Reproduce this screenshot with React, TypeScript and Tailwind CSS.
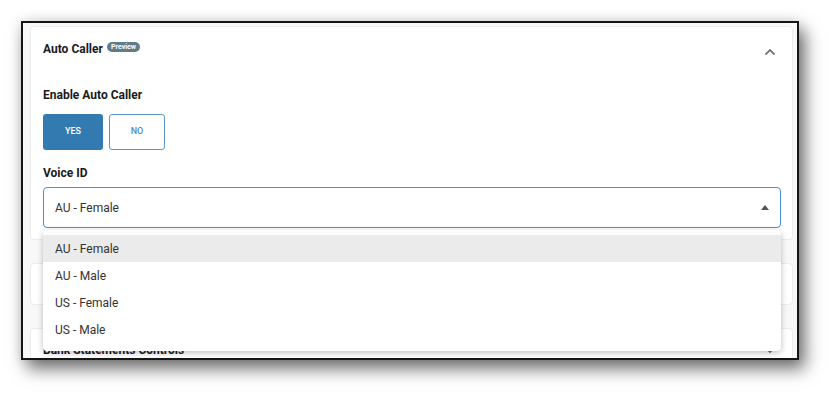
const font = { fontFamily: 'Roboto, "Liberation Sans", sans-serif' }

const voices = ['AU - Female', 'AU - Male', 'US - Female', 'US - Male']

function ChevronUp() {
  return (
    <svg width="12" height="8" viewBox="0 0 12 8" className="text-[#777]">
      <path d="M1.5 6.5 L6 2 L10.5 6.5" fill="none" stroke="currentColor" strokeWidth="1.8" />
    </svg>
  )
}

function ChevronDown() {
  return (
    <svg width="12" height="8" viewBox="0 0 12 8" className="text-[#777]">
      <path d="M1.5 1.5 L6 6 L10.5 1.5" fill="none" stroke="currentColor" strokeWidth="1.8" />
    </svg>
  )
}

function SectionCard({ title }: { title: string }) {
  return (
    <div className="flex h-[42px] shrink-0 items-center justify-between rounded-[4px] border border-[#ececec] bg-white pl-[12px] pr-[16px] pt-[2px]">
      <span className="text-[12px] font-bold text-[#1a1a1a]">{title}</span>
      <ChevronDown />
    </div>
  )
}

export default function App() {
  return (
    <div className="h-[402px] w-[840px] overflow-hidden bg-white pl-[21px] pt-[21px]" style={font}>
      <div className="flex h-[339px] w-[778px] flex-col gap-[23px] overflow-hidden border-2 border-[#151515] bg-[#f8f8f8] pl-[7px] pr-[4px] pt-[3px] shadow-[6px_9px_16px_rgba(0,0,0,0.55),0_0_12px_rgba(0,0,0,0.12)]">
        <div className="relative z-10 shrink-0 rounded-[4px] border border-[#ececec] bg-white pb-[11px] pl-[12px] pr-[11px] pt-[11px]">
          <div className="flex h-[22px] items-center justify-between pr-[5px]">
            <div className="flex items-start">
              <span className="text-[12px] font-bold leading-[22px] text-[#1a1a1a]">Auto Caller</span>
              <span className="ml-[4px] mt-[4px] rounded-full bg-[#5e7c8b] px-[4px] text-[7px] font-bold leading-[10px] text-white">
                Preview
              </span>
            </div>
            <span className="mt-[6px]">
              <ChevronUp />
            </span>
          </div>

          <div className="mt-[27px] text-[12px] font-bold leading-[16px] text-[#1a1a1a]">Enable Auto Caller</div>
          <div className="mt-[11px] flex gap-[6px]">
            <button
              type="button"
              className="h-[36px] w-[60px] rounded-[3px] bg-[#337ab1] text-[9px] font-medium text-white"
            >
              YES
            </button>
            <button
              type="button"
              className="h-[36px] w-[56px] rounded-[3px] border border-[#5b97c9] bg-white text-[9px] font-medium text-[#4f8cc0]"
            >
              NO
            </button>
          </div>

          <div className="mt-[15px] text-[12px] font-bold leading-[16px] text-[#1a1a1a]">Voice ID</div>
          <div className="relative mt-[6px]">
            <div className="flex h-[41px] items-center justify-between rounded-[4px] border border-[#4a8fd6] bg-white pl-[11px] pr-[11px]">
              <span className="text-[12px] text-[#333]">AU - Female</span>
              <svg width="8" height="5" viewBox="0 0 8 5" className="text-[#555]">
                <path d="M0 5 L4 0 L8 5 Z" fill="currentColor" />
              </svg>
            </div>

            <ul className="absolute left-0 right-0 top-[43px] rounded-[4px] bg-white pb-[8px] pt-[5px] shadow-[0_2px_6px_rgba(0,0,0,0.25)]">
              {voices.map((voice, i) => (
                <li
                  key={voice}
                  className={`flex h-[27px] items-center pl-[12px] text-[12px] text-[#333] ${
                    i === 0 ? 'bg-[#ebebeb]' : ''
                  }`}
                >
                  {voice}
                </li>
              ))}
            </ul>
          </div>
        </div>

        <SectionCard title="" />
        <SectionCard title="Bank Statements Controls" />
      </div>
    </div>
  )
}
